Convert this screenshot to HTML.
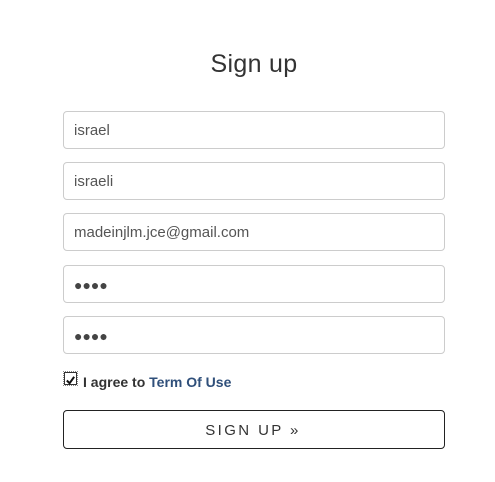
<!DOCTYPE html>
<html><head><style>
*{box-sizing:border-box;margin:0;padding:0}
body{width:495px;height:482px;background:#fff;font-family:"Liberation Sans",sans-serif;position:relative;overflow:hidden}
h1{position:absolute;left:0;width:508px;top:50px;text-align:center;font-weight:300;font-size:25px;color:#333;letter-spacing:0.3px}
.in{position:absolute;left:63px;width:382px;height:38px;border:1px solid #ccc;border-radius:4px;padding-left:10px;font-size:15px;color:#555;line-height:38px}
.dots{font-size:14px;letter-spacing:0px;color:#444}
.cb{position:absolute;left:64px;top:372px;width:13px;height:13px;border:1px solid #333;outline:1px dotted #888;outline-offset:0px;background:#fff}
.lbl{position:absolute;left:83px;top:374px;font-size:14px;font-weight:bold;color:#333}
.lbl span{color:#2f4f7a}
.btn{position:absolute;left:63px;top:410px;width:382px;height:39px;border:1px solid #222;border-radius:4px;text-align:center;line-height:39px;font-size:15px;letter-spacing:2.4px;color:#333;padding-right:2px}
</style></head><body>
<h1>Sign up</h1>
<div class="in" style="top:111px">israel</div>
<div class="in" style="top:162px">israeli</div>
<div class="in" style="top:213px">madeinjlm.jce@gmail.com</div>
<div class="in dots" style="top:265px">&#9679;&#9679;&#9679;&#9679;</div>
<div class="in dots" style="top:316px">&#9679;&#9679;&#9679;&#9679;</div>
<div class="cb"><svg width="11" height="11" viewBox="0 0 12 12"><path d="M2 6 L5 9 L10 2" stroke="#111" stroke-width="2.2" fill="none"/></svg></div>
<div class="lbl">I agree to <span>Term Of Use</span></div>
<div class="btn">SIGN UP &raquo;</div>
</body></html>
